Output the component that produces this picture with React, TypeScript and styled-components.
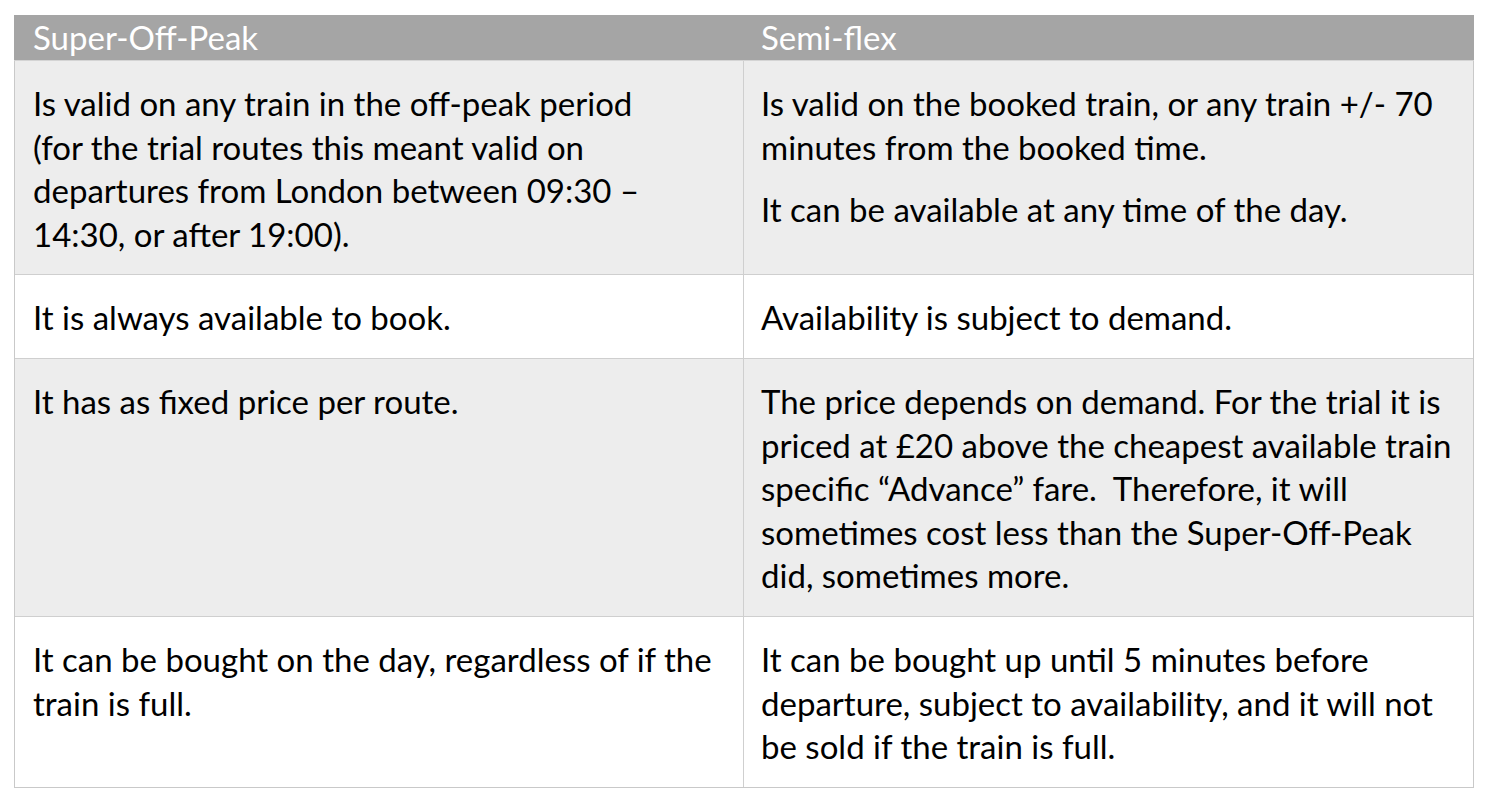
import React from "react";
import styled, { createGlobalStyle } from "styled-components";

const Global = createGlobalStyle`
  html, body { margin: 0; padding: 0; background: #ffffff; }
  body { font-family: Lato, "Open Sans", sans-serif; }
`;

const Page = styled.div`
  padding: 15px 0 0 14px;
`;

const Table = styled.div`
  width: 1460px;
  box-sizing: border-box;
  border-left: 1px solid #c9c9c9;
  border-right: 1px solid #c9c9c9;
  border-bottom: 1px solid #c9c9c9;
`;

const HeaderRow = styled.div`
  display: grid;
  grid-template-columns: 729px 1fr;
  background: #a5a5a5;
  height: 45px;
  border-bottom: 1px solid #d4d4d4;
  margin-left: -1px;
  margin-right: -1px;
`;

const HeaderCell = styled.div<{ first?: boolean }>`
  color: #ffffff;
  font-size: 33px;
  line-height: 43.6px;
  padding: 1px 0 0 ${(p) => (p.first ? "19px" : "18px")};
  white-space: nowrap;
`;

const Row = styled.div<{ shaded?: boolean; last?: boolean }>`
  display: grid;
  grid-template-columns: 729px 1fr;
  background: ${(p) => (p.shaded ? "#ededed" : "#ffffff")};
  border-bottom: ${(p) => (p.last ? "none" : "1px solid #cfcfcf")};
`;

const Cell = styled.div<{ first?: boolean }>`
  padding: 21px 10px 18px ${(p) => (p.first ? "18px" : "17px")};
  border-right: ${(p) => (p.first ? "1px solid #cfcfcf" : "none")};
  display: flex;
  flex-direction: column;
  gap: 19px;
`;

const Para = styled.p`
  margin: 0;
  color: #000000;
  font-size: 33px;
  line-height: 43.6px;
  white-space: nowrap;
`;

type P = string[];
const rows: { left: P[]; right: P[] }[] = [
  {
    left: [
      [
        "Is valid on any train in the off-peak period",
        "(for the trial routes this meant valid on",
        "departures from London between 09:30 \u2013",
        "14:30, or after 19:00).",
      ],
    ],
    right: [
      ["Is valid on the booked train, or any train +/- 70", "minutes from the booked time."],
      ["It can be available at any time of the day."],
    ],
  },
  {
    left: [["It is always available to book."]],
    right: [["Availability is subject to demand."]],
  },
  {
    left: [["It has as fixed price per route."]],
    right: [
      [
        "The price depends on demand. For the trial it is",
        "priced at \u00a320 above the cheapest available train",
        "specific \u201cAdvance\u201d fare.\u00a0 Therefore, it will",
        "sometimes cost less than the Super-Off-Peak",
        "did, sometimes more.",
      ],
    ],
  },
  {
    left: [["It can be bought on the day, regardless of if the", "train is full."]],
    right: [
      [
        "It can be bought up until 5 minutes before",
        "departure, subject to availability, and it will not",
        "be sold if the train is full.",
      ],
    ],
  },
];

const renderParas = (paras: P[]) =>
  paras.map((lines, i) => (
    <Para key={i}>
      {lines.map((l, j) => (
        <React.Fragment key={j}>
          {j > 0 && <br />}
          {l}
        </React.Fragment>
      ))}
    </Para>
  ));

export default function App() {
  return (
    <>
      <Global />
      <Page>
        <Table>
          <HeaderRow>
            <HeaderCell first>Super-Off-Peak</HeaderCell>
            <HeaderCell>Semi-flex</HeaderCell>
          </HeaderRow>
          {rows.map((r, i) => (
            <Row key={i} shaded={i % 2 === 0} last={i === rows.length - 1}>
              <Cell first>{renderParas(r.left)}</Cell>
              <Cell>{renderParas(r.right)}</Cell>
            </Row>
          ))}
        </Table>
      </Page>
    </>
  );
}
